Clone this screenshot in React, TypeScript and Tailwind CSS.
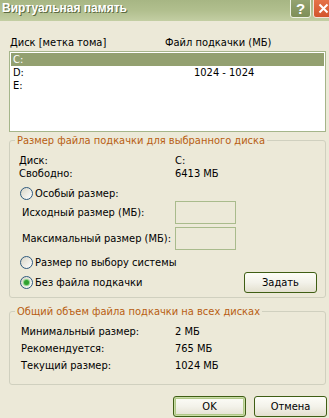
import type { ReactNode } from 'react'

// XP "Olive Green" virtual memory dialog

function Radio({ checked = false, children }: { checked?: boolean; children: ReactNode }) {
  return (
    <div className="flex items-center gap-[2px]">
      <span className="relative flex h-[13px] w-[13px] items-center justify-center rounded-full border border-[#2f5a7e] bg-linear-to-br from-[#d8d5c6] to-[#ffffff]">
        {checked && (
          <span className="h-[5px] w-[5px] rounded-full bg-[#2fa12f] shadow-[0_0_1px_1px_#7fd07f]" />
        )}
      </span>
      <span>{children}</span>
    </div>
  )
}

function XpButton({ label, isDefault = false }: { label: string; isDefault?: boolean }) {
  return (
    <button
      className={
        isDefault
          ? 'flex h-[21px] w-[73px] items-center justify-center rounded-[3px] border border-[#3f5e14] bg-linear-to-b from-[#fdfdf8] via-[#f3f2ea] to-[#e3e0cf] shadow-[inset_0_0_0_1px_#c9dca6,inset_0_0_0_2px_#b0c887]'
          : 'flex h-[21px] w-[73px] items-center justify-center rounded-[3px] border border-[#3f5e14] bg-linear-to-b from-[#fdfdf8] via-[#f3f2ea] to-[#e3e0cf]'
      }
    >
      {label}
    </button>
  )
}

function EditBox() {
  return <div className="h-[23px] w-[61px] border border-[#a9bb8c] bg-[#ece9d8]" />
}

export default function App() {
  return (
    <div className="h-[418px] w-[329px] overflow-hidden bg-[#ece9d8] font-['Tahoma','DejaVu_Sans_Condensed','Liberation_Sans',sans-serif] text-[11px] leading-[13px] text-black">
      {/* Title bar */}
      <div className="flex h-[21px] items-end overflow-hidden bg-linear-to-b from-[#a7b684] via-[#b1bf8e] to-[#c3cea3] pb-[3px]">
        <span className="mb-[2px] self-center pl-[2px] font-['Trebuchet_MS','Liberation_Sans',sans-serif] text-[12px] font-bold text-white [text-shadow:1px_1px_#5d6b42]">
          Виртуальная память
        </span>
        <div className="ml-auto flex gap-[2px]">
          <div className="flex h-[21px] w-[21px] items-center justify-center rounded-[3px] border border-[#eef2e4] bg-linear-to-b from-[#97a674] to-[#7e8f58] pt-[2px] font-['Liberation_Sans',sans-serif] text-[15px] font-bold text-white">
            ?
          </div>
          <div className="-mr-[5px] flex h-[21px] w-[21px] items-center justify-center rounded-[3px] border border-[#f3e2d8] bg-linear-to-b from-[#e8764c] to-[#d2542b] pt-[2px]">
            <svg width="11" height="11" viewBox="0 0 11 11">
              <path d="M1.5 1.5 L9.5 9.5 M9.5 1.5 L1.5 9.5" stroke="#fff" strokeWidth="2" />
            </svg>
          </div>
        </div>
      </div>

      <div className="pl-[9px]">
        {/* Column headers */}
        <div className="mt-[15px] flex h-[13px] pl-[1px]">
          <span className="w-[155px]">Диск [метка тома]</span>
          <span>Файл подкачки (МБ)</span>
        </div>

        {/* Drive list */}
        <div className="mt-[2px] h-[81px] w-[317px] border border-[#a5b58a] bg-white p-[1px]">
          <div className="flex h-[13px] bg-[#93a070] pl-[2px] text-white">C:</div>
          <div className="flex h-[13px] pl-[2px]">
            <span className="w-[181px]">D:</span>
            <span>1024 - 1024</span>
          </div>
          <div className="flex h-[13px] pl-[2px]">E:</div>
        </div>

        {/* Selected drive */}
        <fieldset className="mt-[2px] w-[317px] rounded-[3px] border border-[#d0d0bf] pb-[4px]">
          <legend className="ml-[5px] px-[2px] leading-[13px] text-[#b85e12]">
            Размер файла подкачки для выбранного диска
          </legend>
          <div className="mt-[7px] flex h-[13px] pl-[9px]">
            <span className="w-[156px]">Диск:</span>
            <span>C:</span>
          </div>
          <div className="flex h-[13px] pl-[9px]">
            <span className="w-[156px]">Свободно:</span>
            <span>6413 МБ</span>
          </div>
          <div className="mt-[7px] h-[13px] pl-[10px]">
            <Radio>Особый размер:</Radio>
          </div>
          <div className="mt-[1px] flex h-[23px] items-center pl-[12px]">
            <span className="w-[153px]">Исходный размер (МБ):</span>
            <EditBox />
          </div>
          <div className="mt-[3px] flex h-[23px] items-center pl-[12px]">
            <span className="w-[153px]">Максимальный размер (МБ):</span>
            <EditBox />
          </div>
          <div className="mt-[6px] h-[13px] pl-[10px]">
            <Radio>Размер по выбору системы</Radio>
          </div>
          <div className="mt-[3px] flex h-[21px] items-center pl-[10px]">
            <Radio checked>Без файла подкачки</Radio>
            <div className="ml-auto mr-[8px]">
              <XpButton label="Задать" />
            </div>
          </div>
        </fieldset>

        {/* Totals */}
        <fieldset className="mt-[7px] w-[317px] rounded-[3px] border border-[#d0d0bf] pb-[10px]">
          <legend className="ml-[5px] px-[2px] leading-[13px] text-[#b85e12]">
            Общий объем файла подкачки на всех дисках
          </legend>
          <div className="mt-[5px] flex h-[17px] items-center pl-[11px]">
            <span className="w-[154px]">Минимальный размер:</span>
            <span>2 МБ</span>
          </div>
          <div className="flex h-[17px] items-center pl-[11px]">
            <span className="w-[154px]">Рекомендуется:</span>
            <span>765 МБ</span>
          </div>
          <div className="flex h-[17px] items-center pl-[11px]">
            <span className="w-[154px]">Текущий размер:</span>
            <span>1024 МБ</span>
          </div>
        </fieldset>
      </div>

      {/* Dialog buttons */}
      <div className="mt-[11px] flex justify-end gap-[8px] pr-[2px]">
        <XpButton label="OK" isDefault />
        <XpButton label="Отмена" />
      </div>
    </div>
  )
}
